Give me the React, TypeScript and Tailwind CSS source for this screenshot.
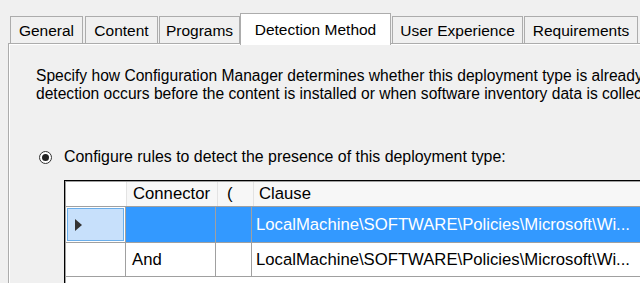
import React from "react";

const tabs = [
  { label: "General", w: 73, ml: 0 },
  { label: "Content", w: 73, ml: 2 },
  { label: "Programs", w: 81, ml: 1 },
  { label: "Detection Method", w: 151, ml: 0, sel: true },
  { label: "User Experience", w: 131, ml: 1 },
  { label: "Requirements", w: 114, ml: 1 },
];

export default function App() {
  return (
    <div
      className="relative w-[640px] h-[283px] overflow-hidden bg-[#f0f0f0] text-[15.6px] text-black"
      style={{ fontFamily: '"Liberation Sans", Arial, sans-serif' }}
    >
      {/* tab strip */}
      <div className="flex items-end h-[44px] pl-[10px] pt-[13px] text-[15.5px]">
        {tabs.map((t) =>
          t.sel ? (
            <div
              key={t.label}
              className="relative z-10 flex h-[32px] shrink-0 items-start justify-center border border-b-0 border-[#acacac] bg-white pt-[4px] -mb-[1px]"
              style={{ width: t.w }}
            >
              {t.label}
            </div>
          ) : (
            <div
              key={t.label}
              className="flex h-[28px] shrink-0 items-center justify-center border border-[#acacac] bg-[#f0f0f0] pt-[1px]"
              style={{ width: t.w, marginLeft: t.ml }}
            >
              {t.label}
            </div>
          )
        )}
      </div>

      {/* panel */}
      <div className="ml-[8px] -mt-[1px] h-[240px] border-l border-t border-[#acacac]">
        <div className="h-full border-l border-t border-white pl-[26px] pt-[22px]">
          <div className="whitespace-nowrap leading-[18px]">
            Specify how Configuration Manager determines whether this deployment type is already present on the client.
          </div>
          <div className="whitespace-nowrap leading-[18px]">
            detection occurs before the content is installed or when software inventory data is collected.
          </div>

          <div className="mt-[45px] flex items-center h-[18px]">
            <div className="ml-[3px] flex h-[13px] w-[13px] items-center justify-center rounded-full border border-[#333] bg-white">
              <div className="h-[7px] w-[7px] rounded-full bg-[#222]" />
            </div>
            <span className="ml-[12px] whitespace-nowrap text-[15.9px]">
              Configure rules to detect the presence of this deployment type:
            </span>
          </div>

          {/* grid */}
          <div className="ml-[28px] mt-[14px] border-l border-t border-black text-[16.7px]">
            <div className="border-l border-t border-[#a0a0a0] bg-white">
              {/* header */}
              <div className="flex h-[25px] border-b border-[#a0a0a0]">
                <div className="w-[60px] shrink-0 bg-white" />
                <div className="flex w-[91px] shrink-0 items-center border-l border-[#e3e3e3] bg-[#f7f7f7] pl-[6px]">
                  Connector
                </div>
                <div className="flex w-[36px] shrink-0 items-center border-l border-[#e3e3e3] bg-[#f7f7f7] pl-[9px]">
                  (
                </div>
                <div className="flex flex-1 items-center border-l border-[#e3e3e3] bg-[#f7f7f7] pl-[5px]">
                  Clause
                </div>
              </div>
              {/* row 1 */}
              <div className="flex h-[36px] border-b border-[#a0a0a0]">
                <div className="w-[60px] shrink-0 border-r border-[#a0a0a0] bg-white p-[1px]">
                  <div className="flex h-full items-center border border-[#6aaeea] bg-[#c7e0fb] pl-[7px]">
                    <svg width="8" height="12" viewBox="0 0 8 12">
                      <path d="M0 0 L7 6 L0 12 Z" fill="#333" />
                    </svg>
                  </div>
                </div>
                <div className="w-[90px] shrink-0 border-r border-[#a0a0a0] bg-[#3399ff]" />
                <div className="w-[36px] shrink-0 border-r border-[#a0a0a0] bg-[#3399ff]" />
                <div className="flex flex-1 items-center bg-[#3399ff] pl-[4px] text-white whitespace-nowrap">
                  LocalMachine\SOFTWARE\Policies\Microsoft\Wi...
                </div>
              </div>
              {/* row 2 */}
              <div className="flex h-[34px] border-b border-[#a0a0a0]">
                <div className="w-[60px] shrink-0 border-r border-[#a0a0a0] bg-white" />
                <div className="flex w-[90px] shrink-0 items-center border-r border-[#a0a0a0] bg-white pl-[6px]">
                  And
                </div>
                <div className="w-[36px] shrink-0 border-r border-[#a0a0a0] bg-white" />
                <div className="flex flex-1 items-center bg-white pl-[4px] whitespace-nowrap">
                  LocalMachine\SOFTWARE\Policies\Microsoft\Wi...
                </div>
              </div>
              <div className="h-[20px] bg-white" />
            </div>
          </div>
        </div>
      </div>
    </div>
  );
}
